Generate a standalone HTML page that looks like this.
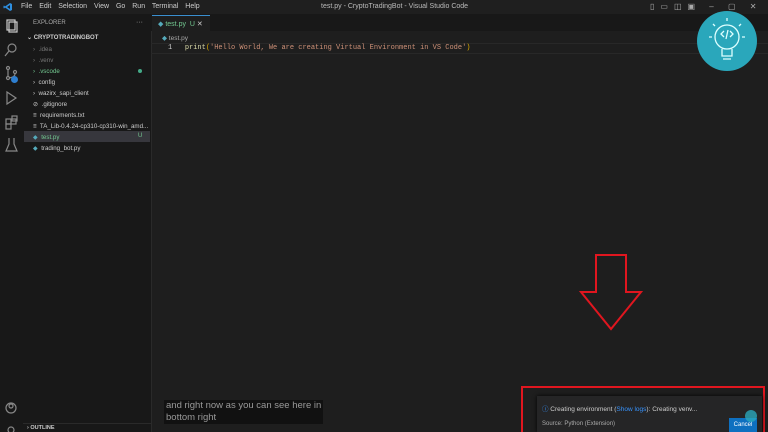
<!DOCTYPE html><html><head><style>
html,body{margin:0;width:768px;height:432px;overflow:hidden}
body{background:#1e1e1e;position:relative;font-family:"Liberation Sans",sans-serif;}
.a{position:absolute}
.t{font-size:7px;color:#ccc;white-space:nowrap}
</style></head><body>
<div class="a" style="left:0;top:0;width:768px;height:14px;background:#1f1f1f"></div>
<svg class="a" style="left:3px;top:2px" width="10" height="10" viewBox="0 0 10 10"><path d="M7 1 L9 2 V8 L7 9 L2 5.5 L1 6.5 L0.5 6 V4 L1 3.5 L2 4.5 Z M7 3 L4 5 L7 7Z" fill="#2e8fe0"/></svg>
<div class="a t" style="left:21px;top:3px;word-spacing:5px">File Edit Selection View Go Run Terminal Help</div>
<div class="a t" style="left:321px;top:3px;color:#bbb">test.py - CryptoTradingBot - Visual Studio Code</div>
<div class="a t" style="left:650px;top:2px;color:#aaa;font-size:8px;letter-spacing:6px">▯▭◫▣ – ▢ ✕</div>
<div class="a" style="left:0;top:14px;width:23px;height:418px;background:#181818"></div>
<svg class="a" style="left:4px;top:18px" width="16" height="414" fill="none" stroke="#888" stroke-width="1.2">
<rect x="3" y="2" width="8" height="10" stroke="#ccc"/><rect x="5" y="4" width="8" height="10" stroke="#ccc"/>
<circle cx="8" cy="30" r="4"/><path d="M5 33 L1 38"/>
<circle cx="4" cy="50" r="1.5"/><circle cx="4" cy="60" r="1.5"/><circle cx="11" cy="54" r="1.5"/><path d="M4 52 V58 M11 56 Q11 59 5 60"/>
<path d="M3 74 L12 80 L3 86 Z"/>
<rect x="2" y="101" width="5" height="5"/><rect x="7" y="101" width="5" height="5"/><rect x="2" y="106" width="5" height="5"/><rect x="8" y="98" width="5" height="5"/>
<path d="M5 120 V126 L2 133 H13 L10 126 V120"/>
<circle cx="7" cy="390" r="5"/><circle cx="7" cy="388" r="2"/>
<circle cx="7" cy="412" r="3"/>
</svg>
<div class="a" style="left:11px;top:76px;width:7px;height:7px;border-radius:50%;background:#2e7fd0"></div>
<div class="a" style="left:23px;top:14px;width:128px;height:418px;background:#181818;border-right:1px solid #2a2a2a"></div>
<div class="a t" style="left:33px;top:20px;font-size:6px;color:#aaa">EXPLORER</div>
<div class="a t" style="left:136px;top:19px;color:#aaa">···</div>
<div class="a t" style="left:27px;top:34px;font-size:6px;font-weight:bold">⌄ CRYPTOTRADINGBOT</div>
<div class="a" style="left:24px;top:131px;width:126px;height:11px;background:#37373d"></div>
<div class="a t" style="left:33px;top:44px;line-height:11px;font-size:6.2px;width:116px;overflow:hidden">
<div style="color:#777">›&nbsp; .idea</div><div style="color:#777">›&nbsp; .venv</div><div style="color:#73c991">›&nbsp; .vscode</div><div>›&nbsp; config</div><div>›&nbsp; wazirx_sapi_client</div><div>⊘&nbsp; .gitignore</div><div>≡&nbsp; requirements.txt</div><div>≡&nbsp; TA_Lib-0.4.24-cp310-cp310-win_amd...</div><div style="color:#73c991"><span style="color:#5ab">◆</span>&nbsp; test.py</div><div><span style="color:#5ab">◆</span>&nbsp; trading_bot.py</div></div>
<div class="a" style="left:138px;top:69px;width:4px;height:4px;border-radius:50%;background:#4a8"></div>
<div class="a t" style="left:138px;top:133px;color:#73c991;font-size:6px">U</div>
<div class="a" style="left:23px;top:423px;width:128px;height:1px;background:#2a2a2a"></div>
<div class="a t" style="left:27px;top:425px;font-size:5.5px;font-weight:bold">› OUTLINE</div>
<div class="a" style="left:151px;top:14px;width:617px;height:17px;background:#181818"></div>
<div class="a" style="left:152px;top:15px;width:58px;height:16px;background:#1e1e1e;border-top:1px solid #3a8fd0"></div>
<div class="a t" style="left:158px;top:20px;color:#73c991"><span style="color:#5ab">◆</span> test.py&nbsp; U <span style="color:#ccc">✕</span></div>
<div class="a t" style="left:162px;top:34px;color:#aaa;font-size:6.5px"><span style="color:#5ab">◆</span> test.py</div>
<div class="a" style="left:151px;top:43px;width:617px;height:9px;border-top:1px solid #282828;border-bottom:1px solid #282828"></div>
<div class="a" style="left:168px;top:44px;font-family:'Liberation Mono',monospace;font-size:7px;color:#ccc;white-space:pre">1   <span style="color:#dcdcaa">print</span><span style="color:#da0">(</span><span style="color:#ce9178">'Hello World, We are creating Virtual Environment in VS Code'</span><span style="color:#da0">)</span></div>
<svg class="a" style="left:560px;top:240px" width="100" height="100"><path d="M36 15 H66 V52 H81 L51 89 L21 52 H36 Z" fill="none" stroke="#e0161f" stroke-width="2"/></svg>
<div class="a" style="left:697px;top:11px;width:60px;height:60px;border-radius:50%;background:#2aa7bb"></div>
<svg class="a" style="left:697px;top:11px" width="60" height="60" fill="none" stroke="#dff" stroke-width="1.3"><circle cx="30" cy="26" r="12"/><path d="M25 38 V45 H35 V38 M26 48 H34 M27 26 L24 23 L27 20 M33 20 L36 23 L33 26 M31 19 L29 28 M30 7 V10 M16 13 L18 15 M44 13 L42 15 M12 26 H15 M45 26 H48"/></svg>
<div class="a" style="left:164px;top:400px;background:#111;font-size:9.5px;color:#999;padding:0 2px;line-height:12px">and right now as you can see here in<br>bottom right</div>
<div class="a" style="left:521px;top:386px;width:244px;height:48px;border:2px solid #e0161f;box-sizing:border-box"></div>
<div class="a" style="left:537px;top:396px;width:225px;height:36px;background:#252526;box-shadow:0 0 4px #000"></div>
<div class="a t" style="left:542px;top:403px;font-size:6.5px"><span style="color:#3794ff">ⓘ</span> Creating environment (<span style="color:#3794ff">Show logs</span>): Creating venv...</div>
<div class="a t" style="left:542px;top:421px;font-size:6px;color:#aaa">Source: Python (Extension)</div>
<div class="a" style="left:729px;top:418px;width:28px;height:14px;background:#0e70c0;color:#fff;font-size:6px;text-align:center;line-height:14px">Cancel</div>
<div class="a" style="left:745px;top:410px;width:12px;height:12px;border-radius:50%;background:#2aa7bb;opacity:.8"></div>
</body></html>
